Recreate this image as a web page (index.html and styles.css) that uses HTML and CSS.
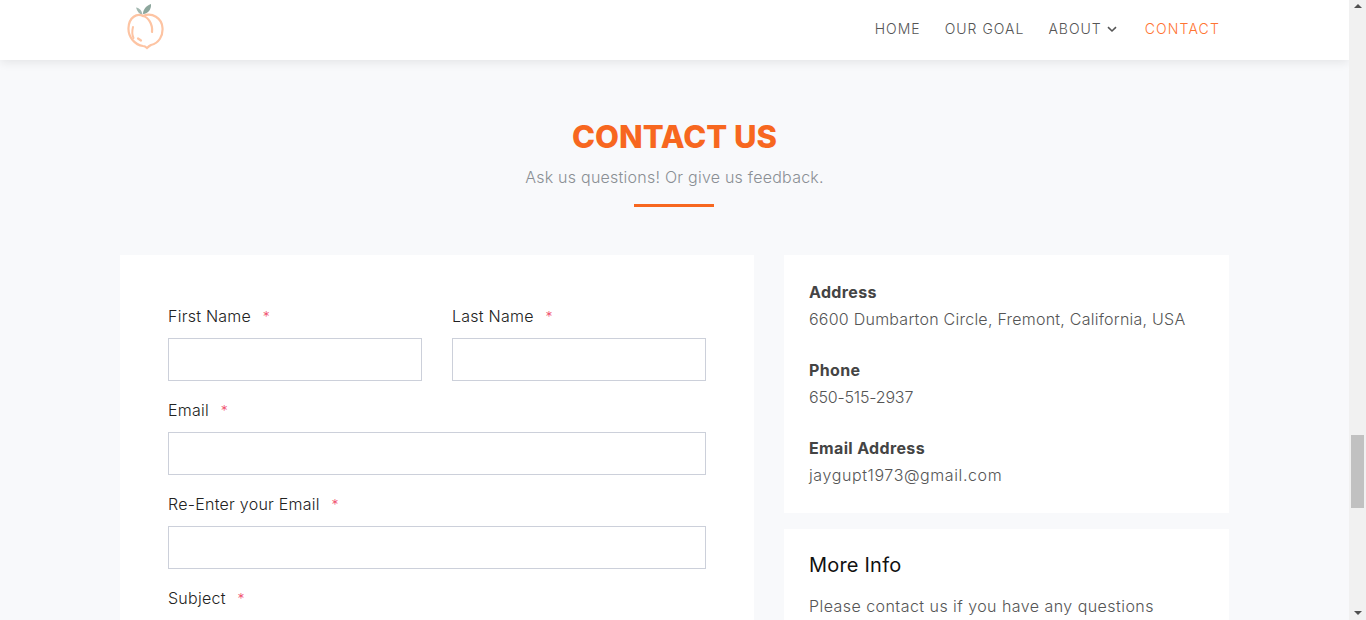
FILE: index.html
```html
<!DOCTYPE html>
<html lang="en">
<head>
    <meta charset="UTF-8">
    <meta name="viewport" content="width=device-width, initial-scale=1.0">
    <title>Contact Us</title>
    <link rel="stylesheet" href="styles.css">
</head>
<body>
    <div class="page">
        <header class="topbar">
            <a class="logo" href="#">
                <svg width="38" height="48" viewBox="0 0 38 48">
                    <path d="M16.5 11 C13 10 11 7 10 3.5 C13.5 4 16 6.5 16.5 11 Z" fill="#a3b8b0"/>
                    <path d="M17 10 C17 5.5 20 2 25 0 C25.5 5 22.5 9.5 17 10 Z" fill="#8ca69c"/>
                    <path d="M17 12 C11 9 3 13 2.5 24 C2 33 9 41 17 42 C19 42 20 43 21 44 C22 43 23 42 25 41 C33 39 37 32 36.5 24 C36 14 26 8 17 12 Z" fill="none" stroke="#fdc4a3" stroke-width="2.2"/>
                    <path d="M17 12 C22 13 27 20 26 28" fill="none" stroke="#fdc4a3" stroke-width="2.2" stroke-linecap="round"/>
                    <path d="M7 23 C6 27 6 31 7.5 34" fill="none" stroke="#fdc4a3" stroke-width="2" stroke-linecap="round"/>
                    <path d="M12 34.5 L15 36.5" fill="none" stroke="#fdc4a3" stroke-width="2.2" stroke-linecap="round"/>
                </svg>
            </a>
            <nav class="nav">
                <a href="#">HOME</a>
                <a href="#">OUR GOAL</a>
                <a href="#" class="has-sub">ABOUT
                    <svg width="10" height="7" viewBox="0 0 10 7"><path d="M1 1.2 L5 5 L9 1.2" fill="none" stroke="#555" stroke-width="1.6"/></svg>
                </a>
                <a href="#" class="active">CONTACT</a>
            </nav>
        </header>

        <section class="heading">
            <h1>CONTACT US</h1>
            <p>Ask us questions! Or give us feedback.</p>
            <div class="rule"></div>
        </section>

        <section class="columns">
            <form class="form-card">
                <div class="row-two">
                    <div class="field">
                        <label>First Name <span class="req">*</span></label>
                        <input type="text">
                    </div>
                    <div class="field">
                        <label>Last Name <span class="req">*</span></label>
                        <input type="text">
                    </div>
                </div>
                <div class="field">
                    <label>Email <span class="req">*</span></label>
                    <input type="text">
                </div>
                <div class="field">
                    <label>Re-Enter your Email <span class="req">*</span></label>
                    <input type="text">
                </div>
                <div class="field">
                    <label>Subject <span class="req">*</span></label>
                    <input type="text">
                </div>
            </form>

            <div class="side">
                <div class="card details">
                    <div class="detail">
                        <h4>Address</h4>
                        <p>6600 Dumbarton Circle, Fremont, California, USA</p>
                    </div>
                    <div class="detail">
                        <h4>Phone</h4>
                        <p class="phone">650-515-2937</p>
                    </div>
                    <div class="detail">
                        <h4>Email Address</h4>
                        <p class="mail">jaygupt1973@gmail.com</p>
                    </div>
                </div>
                <div class="card more">
                    <h3>More Info</h3>
                    <p>Please contact us if you have any questions</p>
                </div>
            </div>
        </section>
    </div>

    <div class="scrollbar">
        <svg class="arrow" width="8" height="4" viewBox="0 0 8 4"><path d="M0 4 L4 0 L8 4 Z" fill="#505050"/></svg>
        <div class="thumb-track"><div class="thumb"></div></div>
        <svg class="arrow" width="8" height="4" viewBox="0 0 8 4"><path d="M0 0 L8 0 L4 4 Z" fill="#505050"/></svg>
    </div>
</body>
</html>
```

FILE: styles.css
```css
html, body {
    height: 100%;
}

body {
    font-family: Inter, "Open Sans", sans-serif;
    font-weight: 300;
    margin: 0;
    padding: 0;
    background-color: #f8f9fb;
    overflow: hidden;
    display: flex;
}

.page {
    flex: 1;
    min-width: 0;
    height: 620px;
    overflow: hidden;
}

.topbar {
    height: 60px;
    background-color: white;
    box-shadow: 0 2px 10px rgba(0, 0, 0, 0.09);
    display: flex;
    justify-content: space-between;
    padding: 0 129px 0 126px;
    position: relative;
}

.logo {
    padding-top: 4px;
}

.nav {
    display: flex;
    align-items: center;
    gap: 24px;
    height: 56px;
}

.nav a {
    font-size: 14px;
    font-weight: 300;
    letter-spacing: 1px;
    color: #555;
    text-decoration: none;
}

.nav a.has-sub svg {
    vertical-align: 1px;
}

.nav a.active {
    color: #ff7433;
    letter-spacing: 1.15px;
    margin-left: 4px;
}

.heading {
    text-align: center;
    padding-top: 58px;
}

.heading h1 {
    margin: 0;
    font-size: 31px;
    line-height: 38px;
    font-weight: 800;
    color: #f7671f;
}

.heading p {
    margin: 7px 0 0;
    font-size: 16px;
    line-height: 28px;
    letter-spacing: 0.24px;
    color: #8a8f94;
}

.rule {
    width: 80px;
    height: 3px;
    background-color: #f7671f;
    margin: 13px 635px 0 634px;
}

.columns {
    display: flex;
    gap: 30px;
    margin: 48px 120px 0;
    align-items: flex-start;
}

.form-card {
    width: 634px;
    flex: none;
    background-color: white;
    padding: 49px 48px 48px;
    box-sizing: border-box;
    display: flex;
    flex-direction: column;
}

.row-two {
    display: flex;
    gap: 30px;
}

.row-two .field {
    flex: 1;
}

.field {
    margin-bottom: 17px;
}

.field label {
    display: block;
    font-size: 16px;
    line-height: 24px;
    letter-spacing: 0.25px;
    color: #222;
    margin-bottom: 10px;
}

.req {
    color: #f0506e;
    font-size: 14px;
    line-height: 1;
    margin-left: 7px;
}

.field input {
    display: block;
    width: 100%;
    height: 43px;
    box-sizing: border-box;
    border: 1px solid #ccd0da;
    background: white;
}

.side {
    flex: 1;
    display: flex;
    flex-direction: column;
    gap: 16px;
}

.card {
    background-color: white;
    padding: 0 25px;
}

.details {
    height: 258px;
    box-sizing: border-box;
    padding-top: 24px;
}

.detail {
    margin-bottom: 24px;
}

.detail h4 {
    margin: 0;
    font-size: 16px;
    line-height: 27px;
    font-weight: 700;
    letter-spacing: 0.35px;
    color: #444;
}

.detail p {
    margin: 0;
    font-size: 16px;
    line-height: 27px;
    letter-spacing: 0.24px;
    color: #555;
}

.detail p.phone {
    letter-spacing: -0.18px;
}

.detail p.mail {
    letter-spacing: 0.6px;
}

.more {
    padding-top: 20px;
    padding-bottom: 40px;
}

.more h3 {
    margin: 0;
    font-size: 20px;
    line-height: 32px;
    font-weight: 400;
    letter-spacing: 0.2px;
    color: #111;
}

.more p {
    margin: 12px 0 0;
    font-size: 16px;
    line-height: 26px;
    letter-spacing: 0.45px;
    color: #555;
}

.scrollbar {
    width: 17px;
    flex: none;
    height: 620px;
    background-color: #f1f1f1;
    display: flex;
    flex-direction: column;
    align-items: center;
    justify-content: space-between;
    padding: 4px 0 5px;
    box-sizing: border-box;
}

.thumb-track {
    flex: 1;
    width: 100%;
    padding-top: 427px;
    box-sizing: border-box;
}

.thumb {
    width: 13px;
    height: 73px;
    margin: 0 auto;
    background-color: #c1c1c1;
}
```
